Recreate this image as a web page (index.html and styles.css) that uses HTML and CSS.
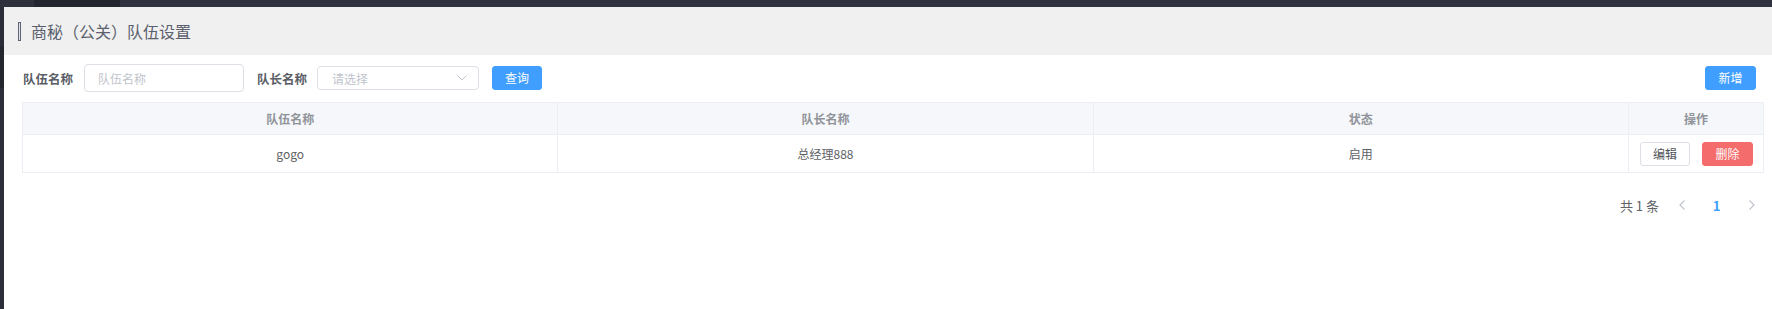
FILE: index.html
```html
<!DOCTYPE html>
<html lang="zh-CN">
<head>
<meta charset="utf-8">
<title>商秘（公关）队伍设置</title>
<link rel="stylesheet" href="styles.css">
</head>
<body>
<div class="frame">
  <div class="topbar"><span class="tb-a"></span><span class="tb-b"></span><span class="tb-c"></span></div>
  <div class="body-row">
    <div class="leftbar"><span class="lb-a"></span><span class="lb-b"></span><span class="lb-c"></span></div>
    <main class="page">
      <header class="page-head">
        <span class="mark"></span>
        <h1 class="title">商秘（公关）队伍设置</h1>
      </header>
      <section class="content">
        <div class="toolbar">
          <div class="filters">
            <label class="f-label">队伍名称</label>
            <input class="f-input" type="text" placeholder="队伍名称">
            <label class="f-label f-label-2">队长名称</label>
            <div class="f-select">
              <span class="ph">请选择</span>
              <svg class="caret" width="10" height="6" viewBox="0 0 10 6"><path d="M0.5 0.5 L5 5 L9.5 0.5" fill="none" stroke="#c0c4cc" stroke-width="1"/></svg>
            </div>
            <button class="btn btn-primary btn-query">查询</button>
          </div>
          <button class="btn btn-primary">新增</button>
        </div>
        <div class="table">
          <div class="th">队伍名称</div>
          <div class="th">队长名称</div>
          <div class="th">状态</div>
          <div class="th last">操作</div>
          <div class="td">gogo</div>
          <div class="td">总经理888</div>
          <div class="td">启用</div>
          <div class="td last ops">
            <button class="btn btn-plain">编辑</button>
            <button class="btn btn-danger">删除</button>
          </div>
        </div>
        <div class="pager">
          <span class="total">共 1 条</span>
          <span class="pg-btn"><svg width="6" height="10" viewBox="0 0 6 10"><path d="M5.5 0.5 L1 5 L5.5 9.5" fill="none" stroke="#c0c4cc" stroke-width="1.2"/></svg></span>
          <span class="pg-btn pg-active">1</span>
          <span class="pg-btn"><svg width="6" height="10" viewBox="0 0 6 10"><path d="M0.5 0.5 L5 5 L0.5 9.5" fill="none" stroke="#c0c4cc" stroke-width="1.2"/></svg></span>
        </div>
      </section>
    </main>
  </div>
</div>
</body>
</html>
```

FILE: styles.css
```css
* { box-sizing: border-box; }
html, body { margin: 0; padding: 0; }
body {
  width: 1772px;
  height: 309px;
  overflow: hidden;
  background: #30333f;
  font-family: "Noto Sans CJK SC", "Noto Sans", sans-serif;
  color: #606266;
}
.frame { display: flex; flex-direction: column; height: 309px; }
.topbar { display: flex; height: 7px; flex: none; }
.tb-a { width: 34px; background: #2e313b; }
.tb-b { width: 86px; background: #23262e; }
.tb-c { flex: 1; background: #30333f; }
.body-row { display: flex; flex: 1; min-height: 0; }
.leftbar { width: 4px; display: flex; flex-direction: column; flex: none; }
.lb-a { height: 40px; background: #2a2d37; }
.lb-b { height: 41px; background: #23262d; }
.lb-c { flex: 1; background: #2b2e38; }
.page { flex: 1; background: #fff; display: flex; flex-direction: column; }
.page-head {
  height: 48px;
  background: #f0f0f0;
  display: flex;
  align-items: center;
  padding-left: 14px;
}
.mark {
  width: 3px;
  height: 19px;
  border: 1px solid #5c6372;
  background: #e4e5e8;
  margin-right: 10px;
}
.title {
  margin: 0;
  font-size: 16px;
  font-weight: normal;
  color: #5a606d;
  line-height: 20px;
}
.content { padding: 9px 8px 0 18px; }
.toolbar {
  display: flex;
  align-items: center;
  justify-content: space-between;
  height: 28px;
  padding-right: 8px;
}
.filters { display: flex; align-items: center; }
.f-label {
  font-size: 12.5px;
  font-weight: bold;
  color: #5a5e66;
  margin-left: 1px;
  margin-right: 11px;
}
.f-label-2 { margin-left: 13px; margin-right: 10px; }
.f-input {
  width: 160px;
  height: 28px;
  border: 1px solid #dcdfe6;
  border-radius: 4px;
  padding: 0 13px;
  font-family: inherit;
  font-size: 12px;
  color: #606266;
  outline: none;
}
.f-input::placeholder { color: #c0c4cc; }
.f-select {
  width: 162px;
  height: 24px;
  border: 1px solid #dcdfe6;
  border-radius: 4px;
  display: flex;
  align-items: center;
  justify-content: space-between;
  padding: 0 11px 0 14px;
}
.ph { font-size: 12px; color: #c0c4cc; }
.caret { display: block; }
.btn {
  width: 50px;
  height: 24px;
  border-radius: 3px;
  border: 1px solid transparent;
  font-family: inherit;
  font-size: 12px;
  line-height: 1;
  padding: 0;
  cursor: pointer;
}
.btn-primary { background: #409eff; border-color: #409eff; color: #fff; width: 51px; }
.btn-query { margin-left: 13px; width: 50px; }
.btn-plain { background: #fff; border-color: #dcdfe6; color: #4f5259; }
.btn-danger { background: #f56c6c; border-color: #f56c6c; color: #fff; width: 51px; }
.table {
  margin-top: 10px;
  display: grid;
  grid-template-columns: 1fr 1fr 1fr 134px;
  border: 1px solid #ebeef5;
  border-bottom: none;
  width: 1742px;
}
.th, .td {
  display: flex;
  align-items: center;
  justify-content: center;
  font-size: 12px;
  border-right: 1px solid #ebeef5;
  border-bottom: 1px solid #ebeef5;
}
.th.last, .td.last { border-right: none; }
.th {
  height: 32px;
  background: #f5f7fa;
  color: #909399;
  font-weight: bold;
}
.td { height: 38px; color: #606266; }
.ops { justify-content: flex-start; padding-left: 11px; gap: 12px; }
.pager {
  margin-top: 18px;
  display: flex;
  align-items: center;
  justify-content: flex-end;
  height: 28px;
  margin-right: -5px;
}
.total { font-size: 13px; color: #606266; margin-right: 5px; }
.pg-btn {
  width: 35px;
  height: 28px;
  display: flex;
  align-items: center;
  justify-content: center;
  font-size: 13px;
}
.pg-active { color: #409eff; font-weight: bold; }
```
